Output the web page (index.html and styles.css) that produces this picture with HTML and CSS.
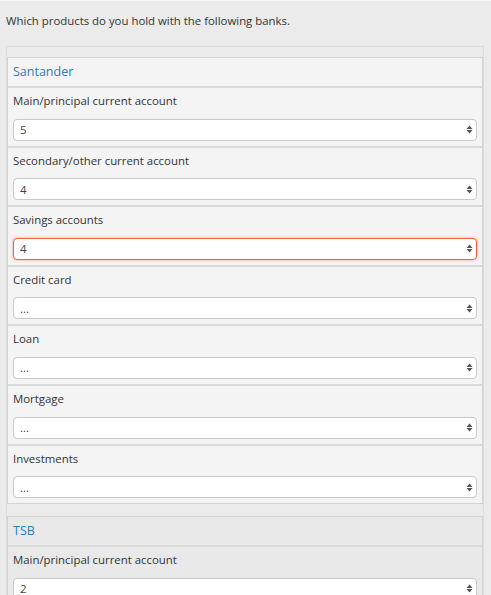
FILE: index.html
```html
<!DOCTYPE html>
<html>
<head>
<meta charset="utf-8">
<link rel="stylesheet" href="styles.css">
</head>
<body>
<div class="question">Which products do you hold with the following banks.</div>
<div class="outer">
  <div class="bank active">
    <div class="bank-head">Santander</div>
    <div class="row"><div class="label">Main/principal current account</div><div class="sel"><span>5</span><svg class="arr" width="7" height="9" viewBox="0 0 7 9"><path d="M3.5 0.5 L6.5 4 H0.5 Z M0.5 5 H6.5 L3.5 8.5 Z" fill="#555"/></svg></div></div>
    <div class="row"><div class="label">Secondary/other current account</div><div class="sel"><span>4</span><svg class="arr" width="7" height="9" viewBox="0 0 7 9"><path d="M3.5 0.5 L6.5 4 H0.5 Z M0.5 5 H6.5 L3.5 8.5 Z" fill="#555"/></svg></div></div>
    <div class="row"><div class="label">Savings accounts</div><div class="sel focus"><span>4</span><svg class="arr" width="7" height="9" viewBox="0 0 7 9"><path d="M3.5 0.5 L6.5 4 H0.5 Z M0.5 5 H6.5 L3.5 8.5 Z" fill="#555"/></svg></div></div>
    <div class="row"><div class="label">Credit card</div><div class="sel"><span>...</span><svg class="arr" width="7" height="9" viewBox="0 0 7 9"><path d="M3.5 0.5 L6.5 4 H0.5 Z M0.5 5 H6.5 L3.5 8.5 Z" fill="#555"/></svg></div></div>
    <div class="row"><div class="label">Loan</div><div class="sel"><span>...</span><svg class="arr" width="7" height="9" viewBox="0 0 7 9"><path d="M3.5 0.5 L6.5 4 H0.5 Z M0.5 5 H6.5 L3.5 8.5 Z" fill="#555"/></svg></div></div>
    <div class="row"><div class="label">Mortgage</div><div class="sel"><span>...</span><svg class="arr" width="7" height="9" viewBox="0 0 7 9"><path d="M3.5 0.5 L6.5 4 H0.5 Z M0.5 5 H6.5 L3.5 8.5 Z" fill="#555"/></svg></div></div>
    <div class="row"><div class="label">Investments</div><div class="sel"><span>...</span><svg class="arr" width="7" height="9" viewBox="0 0 7 9"><path d="M3.5 0.5 L6.5 4 H0.5 Z M0.5 5 H6.5 L3.5 8.5 Z" fill="#555"/></svg></div></div>
  </div>
  <div class="bank">
    <div class="bank-head">TSB</div>
    <div class="row"><div class="label">Main/principal current account</div><div class="sel"><span>2</span><svg class="arr" width="7" height="9" viewBox="0 0 7 9"><path d="M3.5 0.5 L6.5 4 H0.5 Z M0.5 5 H6.5 L3.5 8.5 Z" fill="#555"/></svg></div></div>
  </div>
</div>
</body>
</html>
```
FILE: styles.css
```css
html, body {
  margin: 0;
  padding: 0;
}
body {
  background: #ebebeb;
  font-family: "Open Sans", "Noto Sans", sans-serif;
  font-size: 11.4px;
  color: #333;
  border-top: 1px solid #f3f3f3;
}
.question {
  padding: 12px 6px 0;
  line-height: 16px;
  height: 33px;
}
.outer {
  margin: 0 7px 0 6px;
  border: 1px solid #dcdcdc;
  border-bottom: none;
  padding-top: 10px;
}
.bank {
  border: 1px solid #d4d4d4;
  background: #e9e9e9;
  margin-bottom: 12px;
}
.bank.active {
  background: #f4f4f4;
}
.bank-head {
  height: 28px;
  line-height: 28px;
  padding: 0 5px;
  font-size: 12.5px;
  color: #2f7cb3;
  border-bottom: 2px solid #dadada;
}
.row {
  padding: 5px 5px 5px;
  border-bottom: 2px solid #dadada;
}
.row:last-child {
  border-bottom: none;
}
.label {
  line-height: 16px;
  height: 16px;
  margin-bottom: 9.6px;
}
.sel {
  height: 20px;
  border: 1px solid #c9c9c9;
  border-radius: 4px;
  background: #fff;
  display: flex;
  align-items: center;
  justify-content: space-between;
  padding: 0 3px 0 6px;
  color: #444;
}
.sel.focus {
  border-color: #f0623f;
  box-shadow: 0 0 3px rgba(240, 98, 63, 0.55);
}
.arr {
  display: block;
}
```
